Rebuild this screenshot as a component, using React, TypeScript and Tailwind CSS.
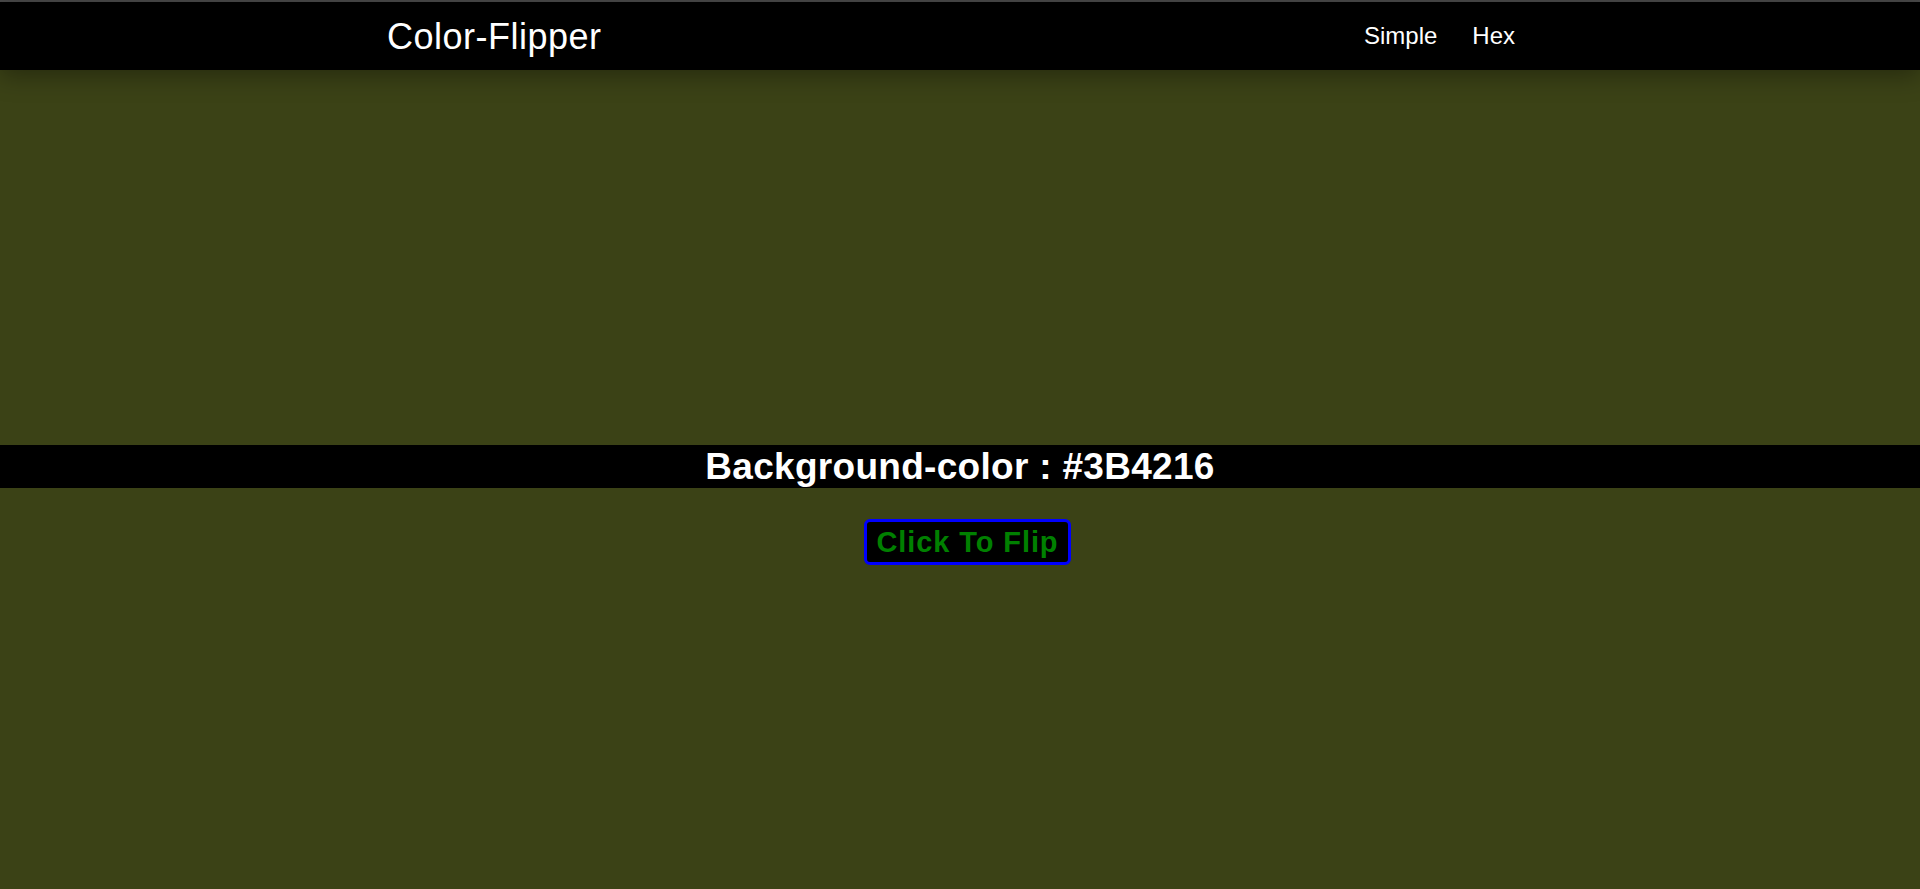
import { useState } from "react";

export default function App() {
  const [color, setColor] = useState("#3B4216");

  const flip = () => {
    let hex = "#";
    const chars = "0123456789ABCDEF";
    for (let i = 0; i < 6; i++) {
      hex += chars[Math.floor(Math.random() * 16)];
    }
    setColor(hex);
  };

  return (
    <div
      className="min-h-[889px] font-['Liberation_Sans',Arial,sans-serif] border-t-2 border-[#4a4a4a]"
      style={{ backgroundColor: color }}
    >
      {/* Navbar */}
      <nav className="h-[68px] bg-black shadow-[0_6px_24px_rgba(0,0,0,0.35)] relative">
        <div className="w-[60%] mx-auto h-full flex items-center justify-between">
          <h2 className="text-white text-[36px] leading-[41px] tracking-[0.5px] pl-[3px]">
            Color-Flipper
          </h2>
          <ul className="flex items-center gap-[35px] pr-[21px] text-white text-[24px] leading-[28px]">
            <li>
              <a href="#">Simple</a>
            </li>
            <li>
              <a href="#">Hex</a>
            </li>
          </ul>
        </div>
      </nav>

      {/* Main */}
      <main className="flex flex-col items-center pt-[375px]">
        <h1 className="w-full bg-black text-white text-center font-bold text-[37px] tracking-[0.3px] h-[43px] leading-[43px]">
          Background-color : {color}
        </h1>
        <button
          onClick={flip}
          className="mt-[31px] ml-[15px] bg-black border-[3px] border-[#0000ff] rounded-[6px] px-[10px] py-[5px] text-[#008000] font-bold text-[29px] leading-[30px] tracking-[0.9px]"
        >
          Click To Flip
        </button>
      </main>
    </div>
  );
}
